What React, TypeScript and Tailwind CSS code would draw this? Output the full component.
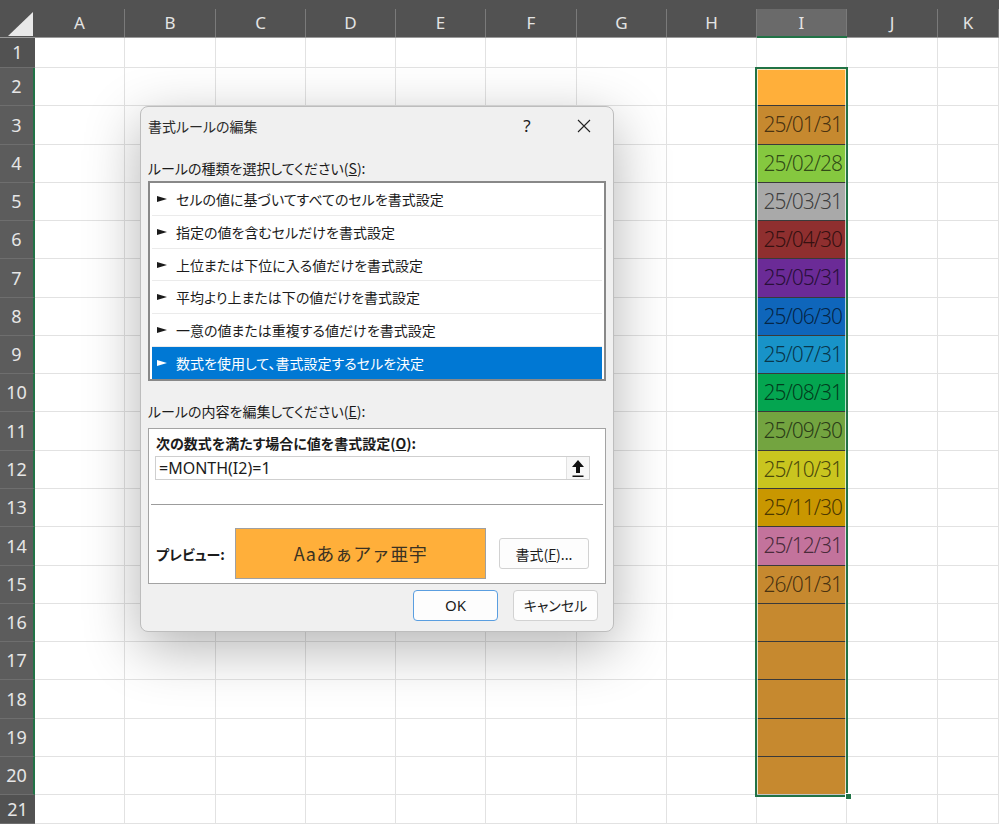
import React from 'react';

const COLS = [
    { label: 'A', w: 'w-[90px]' },
    { label: 'B', w: 'w-[91px]' },
    { label: 'C', w: 'w-[90px]' },
    { label: 'D', w: 'w-[90px]' },
    { label: 'E', w: 'w-[90px]' },
    { label: 'F', w: 'w-[91px]' },
    { label: 'G', w: 'w-[90px]' },
    { label: 'H', w: 'w-[90px]' },
    { label: 'I', w: 'w-[90px]' },
    { label: 'J', w: 'w-[91px]' },
    { label: 'K', w: 'flex-1' },
];

// row height + colored cell in column I (rows 2-20 are selected)
const ROWS: { n: number; h: string; fill?: string; date?: string }[] = [
    { n: 1, h: 'h-[30px]' },
    { n: 2, h: 'h-[38px]', fill: 'bg-[#ffaf3a]' },
    { n: 3, h: 'h-[39px]', fill: 'bg-[#c6892f]', date: '25/01/31' },
    { n: 4, h: 'h-[38px]', fill: 'bg-[#85c83f]', date: '25/02/28' },
    { n: 5, h: 'h-[38px]', fill: 'bg-[#a9a9a9]', date: '25/03/31' },
    { n: 6, h: 'h-[38px]', fill: 'bg-[#8f2f2f]', date: '25/04/30' },
    { n: 7, h: 'h-[39px]', fill: 'bg-[#6b2b97]', date: '25/05/31' },
    { n: 8, h: 'h-[38px]', fill: 'bg-[#0f66bb]', date: '25/06/30' },
    { n: 9, h: 'h-[38px]', fill: 'bg-[#1893c8]', date: '25/07/31' },
    { n: 10, h: 'h-[38px]', fill: 'bg-[#04a550]', date: '25/08/31' },
    { n: 11, h: 'h-[39px]', fill: 'bg-[#73a440]', date: '25/09/30' },
    { n: 12, h: 'h-[38px]', fill: 'bg-[#c9c51f]', date: '25/10/31' },
    { n: 13, h: 'h-[38px]', fill: 'bg-[#c99700]', date: '25/11/30' },
    { n: 14, h: 'h-[39px]', fill: 'bg-[#c3739c]', date: '25/12/31' },
    { n: 15, h: 'h-[38px]', fill: 'bg-[#c6892f]', date: '26/01/31' },
    { n: 16, h: 'h-[38px]', fill: 'bg-[#c6892f]' },
    { n: 17, h: 'h-[38px]', fill: 'bg-[#c6892f]' },
    { n: 18, h: 'h-[39px]', fill: 'bg-[#c6892f]' },
    { n: 19, h: 'h-[38px]', fill: 'bg-[#c6892f]' },
    { n: 20, h: 'h-[38px]', fill: 'bg-[#c6892f]' },
    { n: 21, h: 'h-[29px]' },
];

const RULES = [
    { text: 'セルの値に基づいてすべてのセルを書式設定', h: 'h-[33px]' },
    { text: '指定の値を含むセルだけを書式設定', h: 'h-[33px]' },
    { text: '上位または下位に入る値だけを書式設定', h: 'h-[32px]' },
    { text: '平均より上または下の値だけを書式設定', h: 'h-[33px]' },
    { text: '一意の値または重複する値だけを書式設定', h: 'h-[33px]' },
    { text: '数式を使用して、書式設定するセルを決定', h: 'h-[32px]', selected: true },
];

const Pointer: React.FC<{ color: string }> = ({ color }) => (
    <svg width="10" height="6" viewBox="0 0 10 6" className="shrink-0">
        <polygon points="0,0 10,3 0,6" fill={color} />
    </svg>
);

const Header = () => (
    <div className="flex h-[38px] bg-[#525252] font-['Noto_Sans',sans-serif] text-[17px] text-[#e4e4e4]">
        <div className="w-[35px] border-b border-[#9a9a9a] flex">
            <svg width="35" height="37" viewBox="0 0 35 37">
                <polygon points="8,36 33,36 33,12" fill="#e8e8e8" />
            </svg>
        </div>
        {COLS.map((c) => {
            const sel = c.label === 'I';
            return (
                <div
                    key={c.label}
                    className={`${c.w} pt-[9px] flex ${sel ? 'border-b-2 border-[#217346]' : 'border-b border-[#9a9a9a]'}`}
                >
                    <div
                        className={`flex-1 flex items-center justify-center border-r border-[#7a7a7a] ${sel ? 'bg-[#6a6a6a]' : ''}`}
                    >
                        {c.label}
                    </div>
                </div>
            );
        })}
    </div>
);

const Sheet = () => (
    <div className="flex flex-col">
        {ROWS.map((r) => {
            const selected = !!r.fill;
            return (
                <div key={r.n} className={`flex ${r.h}`}>
                    <div
                        className={`w-[35px] shrink-0 flex items-center justify-center border-b border-[#6e6e6e] font-['Noto_Sans',sans-serif] text-[18px] text-[#e6e6e6] ${selected ? 'bg-[#5c5c5c] border-r-2 border-r-[#217346]' : 'bg-[#525252]'}`}
                    >
                        {r.n}
                    </div>
                    {COLS.map((c) => {
                        if (c.label === 'I' && r.fill) {
                            return (
                                <div
                                    key={c.label}
                                    className={`${c.w} ${r.fill} border-b border-[#3a3a3a] flex items-center justify-end pr-[5px] font-['Noto_Sans',sans-serif] font-light text-[21px] tracking-[-1px] text-black/65`}
                                >
                                    {r.date}
                                </div>
                            );
                        }
                        return (
                            <div
                                key={c.label}
                                className={`${c.w} border-r border-b border-[#e2e2e2] bg-white`}
                            />
                        );
                    })}
                </div>
            );
        })}
    </div>
);

const Dialog = () => (
    <div className="absolute left-[140px] top-[106px] w-[474px] h-[526px] rounded-[8px] border border-[#bdbdbd] bg-[#f0f0f0] shadow-[0_16px_56px_rgba(0,0,0,0.3)] flex flex-col text-[#1b1b1b] font-['Noto_Sans_CJK_JP','Noto_Sans',sans-serif] [font-feature-settings:'palt'] text-[14px]">
        {/* title bar */}
        <div className="h-[37px] flex items-center pl-[7px]">
            <span className="leading-[20px] text-[#2a2a2a]">書式ルールの編集</span>
            <span className="ml-auto w-[58px] text-center text-[17px] font-['Noto_Sans',sans-serif]">?</span>
            <span className="w-[56px] mr-[1px] flex items-center justify-center">
                <svg width="14" height="14" viewBox="0 0 14 14">
                    <path d="M1 1 L13 13 M13 1 L1 13" stroke="#222" strokeWidth="1.1" />
                </svg>
            </span>
        </div>

        <div className="flex flex-col px-[7px]">
            <div className="mt-[14px] leading-[20px]">
                ルールの種類を選択してください(<span className="underline">S</span>):
            </div>

            {/* rule type list */}
            <div className="mt-[3px] border-2 border-[#888888] bg-white px-[2px] flex flex-col">
                {RULES.map((rule) => (
                    <div
                        key={rule.text}
                        className={`${rule.h} flex items-center gap-[9px] pl-[5px] ${rule.selected ? 'bg-[#0078d4] text-white' : 'border-b border-[#ebebeb]'}`}
                    >
                        <Pointer color={rule.selected ? '#ffffff' : '#1b1b1b'} />
                        <span className="leading-[20px]">{rule.text}</span>
                    </div>
                ))}
            </div>

            <div className="mt-[20px] leading-[20px]">
                ルールの内容を編集してください(<span className="underline">E</span>):
            </div>

            {/* rule description */}
            <div className="mt-[7px] h-[156px] border border-[#a3a3a3] bg-white flex flex-col">
                <div className="pt-[4px] pl-[7px] leading-[20px] font-bold">
                    次の数式を満たす場合に値を書式設定(<span className="underline">O</span>):
                </div>
                <div className="mt-[3px] ml-[6px] w-[435px] h-[24px] border border-[#cfcfcf] flex items-center">
                    <span className="pl-[3px] font-['Noto_Sans',sans-serif] [font-feature-settings:normal] text-[16px] leading-[20px]">
                        =MONTH(I2)=1
                    </span>
                    <div className="ml-auto w-[23px] h-full bg-[#f7f7f7] border-l border-[#e2e2e2] flex items-center justify-center">
                        <svg width="14" height="19" viewBox="0 0 14 19">
                            <path d="M7 1 L13 8 L9 8 L9 14 L5 14 L5 8 L1 8 Z" fill="#111" />
                            <rect x="1.5" y="16.5" width="11" height="1.5" fill="#111" />
                        </svg>
                    </div>
                </div>
                <div className="mt-[24px] mx-[2px] border-t border-[#9c9c9c]" />
                <div className="mt-[23px] flex items-center">
                    <span className="pl-[7px] w-[86px] font-bold leading-[20px]">プレビュー:</span>
                    <div className="w-[251px] h-[51px] border border-[#a0a0a0] bg-[#ffaf3a] flex items-center justify-center text-[18px] text-[#3b3222] [font-feature-settings:normal] tracking-[0.5px]">
                        Aaあぁアァ亜宇
                    </div>
                    <button className="ml-[13px] w-[90px] h-[31px] rounded-[3px] border border-[#d2d2d2] bg-[#fdfdfd] flex items-center justify-center leading-[20px]">
                        書式(<span className="underline">F</span>)...
                    </button>
                </div>
            </div>

            {/* OK / Cancel */}
            <div className="mt-[6px] pr-[8px] flex justify-end gap-[15px]">
                <button className="w-[85px] h-[31px] rounded-[4px] border border-[#5a9ee0] bg-[#fdfdfd] flex items-center justify-center font-['Noto_Sans',sans-serif] text-[15px]">
                    OK
                </button>
                <button className="w-[85px] h-[31px] rounded-[4px] border border-[#d2d2d2] bg-[#fdfdfd] flex items-center justify-center">
                    キャンセル
                </button>
            </div>
        </div>
    </div>
);

export default function App() {
    return (
        <div className="relative w-[999px] h-[824px] overflow-hidden bg-white">
            <Header />
            <Sheet />

            {/* selection outline around I2:I20 */}
            <div className="absolute left-[755px] top-[67px] w-[93px] h-[730px] border-2 border-[#217346] shadow-[inset_0_0_0_1px_rgba(255,255,255,0.7)]" />
            <div className="absolute left-[845px] top-[793px] w-[7px] h-[7px] bg-[#217346] border border-white" />

            <Dialog />
        </div>
    );
}
